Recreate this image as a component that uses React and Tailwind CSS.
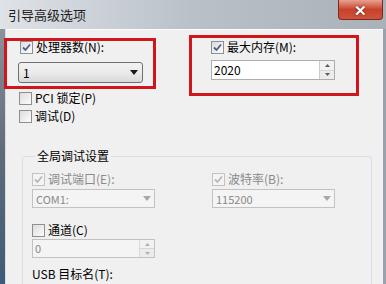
const Check = ({ checked, disabled }) => (
	<div
		className={`${disabled ? "border-[#c3c3c3] bg-[#f4f4f4]" : "border-[#8e8f8f] bg-gradient-to-br from-[#dcdcdc] to-[#fdfdfd]"} border w-[13px] h-[13px] flex items-center justify-center shrink-0`}
	>
		{checked && (
			<svg width="9" height="9" viewBox="0 0 9 9">
				<path
					d="M1 4.5 L3.5 7 L8 1.5"
					fill="none"
					stroke={disabled ? "#b8b8b8" : "#4a5e92"}
					strokeWidth="1.8"
				/>
			</svg>
		)}
	</div>
);

const CheckRow = ({ checked, disabled, label, className = "" }) => (
	<div className={`flex items-center gap-[3px] h-[14px] ${className}`}>
		<Check checked={checked} disabled={disabled} />
		<span
			className={`${disabled ? "text-[#8a8a8a]" : "text-black"} text-[12px] leading-[14px] whitespace-nowrap`}
		>
			{label}
		</span>
	</div>
);

const Arrow = ({ disabled }) => (
	<svg width="8" height="5" viewBox="0 0 8 5">
		<path d="M0 0 L8 0 L4 5 Z" fill={disabled ? "#a8a8a8" : "#1a1a1a"} />
	</svg>
);

const Spinner = ({ disabled }) => (
	<div
		className={`${disabled ? "border-[#dadada]" : "border-[#c9ccd1]"} border-l flex flex-col w-[15px] h-full`}
	>
		<div className="flex-1 flex items-center justify-center border-b border-[#d6d6d6] bg-[#f2f2f2]">
			<svg width="5" height="3" viewBox="0 0 5 3">
				<path d="M0 3 L2.5 0 L5 3 Z" fill={disabled ? "#b0b0b0" : "#5a5a5a"} />
			</svg>
		</div>
		<div className="flex-1 flex items-center justify-center bg-[#ececec]">
			<svg width="5" height="3" viewBox="0 0 5 3">
				<path d="M0 0 L2.5 3 L5 0 Z" fill={disabled ? "#b0b0b0" : "#5a5a5a"} />
			</svg>
		</div>
	</div>
);

export default function App() {
	return (
		<div
			className="w-[386px] h-[284px] overflow-hidden flex flex-col bg-[#f0f0f0]"
			style={{ fontFamily: '"Noto Sans CJK SC", "Liberation Sans", sans-serif' }}
		>
			{/* title bar */}
			<div className="h-[29px] shrink-0 flex items-start bg-gradient-to-r from-[#dfe3e8] via-[#b9c0c8] to-[#aab1b9] relative">
				<span className="ml-[8px] mt-[7px] text-[13px] leading-[16px] text-[#1d1d1d]">
					引导高级选项
				</span>
				<div className="ml-auto mr-[3px] w-[45px] h-[20px] rounded-b-[4px] border border-t-0 border-[#7a2a22] bg-gradient-to-b from-[#e8a090] via-[#c7412c] to-[#d0533a] flex items-center justify-center">
					<span className="text-white font-bold text-[15px] leading-[15px] [text-shadow:0_0_2px_#3a0a05]">
						✕
					</span>
				</div>
			</div>

			<div className="flex-1 flex min-h-0">
				{/* left frame */}
				<div className="w-[6px] shrink-0 bg-gradient-to-b from-[#8a929c] via-[#5d6a7a] to-[#3d5a78] border-r border-[#d8dce0]" />

				{/* client */}
				<div className="flex-1 relative bg-[#f0f0f0] border-t border-[#fcfcfc]">
					<div className="flex pl-[12px] pt-[10px]">
						<div className="w-[126px]">
							<CheckRow checked label="处理器数(N):" className="ml-[2px]" />
							<div className="mt-[8px] h-[21px] w-[125px] rounded-[3px] border border-[#707070] bg-gradient-to-b from-[#f2f2f2] via-[#ebebeb] to-[#d9d9d9] flex items-center px-[4px] justify-between">
								<span className="text-[12px] leading-[14px] text-black">1</span>
								<Arrow />
							</div>
							<CheckRow label="PCI 锁定(P)" className="mt-[8px] ml-[1px]" />
							<CheckRow label="调试(D)" className="mt-[4px] ml-[1px]" />
						</div>
						<div className="ml-[67px] w-[124px]">
							<CheckRow checked label="最大内存(M):" />
							<div className="mt-[6px] h-[20px] w-[124px] border border-[#abadb3] bg-white flex items-stretch">
								<span className="flex-1 text-[12px] leading-[18px] px-[2px] text-black">2020</span>
								<Spinner />
							</div>
						</div>
					</div>

					{/* group box */}
					<fieldset className="ml-[16px] mt-[26px] w-[350px] h-[200px] border border-[#d5dfe5] rounded-[3px] pl-[9px] pt-[9px]">
						<legend className="ml-[3px] px-[2px] text-[12px] leading-[14px] text-black">
							全局调试设置
						</legend>
						<div className="flex">
							<div className="w-[123px]">
								<CheckRow checked disabled label="调试端口(E):" />
								<div className="mt-[3px] h-[19px] w-[123px] border border-[#c2c2c2] bg-[#f4f4f4] flex items-center px-[3px] justify-between">
									<span className="text-[11px] leading-[14px] text-[#8a8a8a]">COM1:</span>
									<Arrow disabled />
								</div>
								<CheckRow label="通道(C)" className="mt-[15px]" />
								<div className="mt-[2px] h-[19px] w-[123px] border border-[#c2c2c2] bg-[#f4f4f4] flex items-stretch">
									<span className="flex-1 text-[11px] leading-[17px] px-[2px] text-[#8a8a8a]">0</span>
									<Spinner disabled />
								</div>
								<div className="mt-[9px] text-[12px] leading-[14px] text-black whitespace-nowrap">
									USB 目标名(T):
								</div>
							</div>
							<div className="ml-[57px] w-[123px]">
								<CheckRow checked disabled label="波特率(B):" />
								<div className="mt-[3px] h-[19px] w-[123px] border border-[#c2c2c2] bg-[#f4f4f4] flex items-center px-[3px] justify-between">
									<span className="text-[11px] leading-[14px] text-[#8a8a8a]">115200</span>
									<Arrow disabled />
								</div>
							</div>
						</div>
					</fieldset>

					{/* red annotation boxes */}
					<div className="absolute left-[-2px] top-[8px] w-[152px] h-[51px] border-[3px] border-[#d0151c]" />
					<div className="absolute left-[183px] top-[5px] w-[170px] h-[61px] border-[3px] border-[#d0151c]" />
				</div>

				{/* right frame */}
				<div className="w-[3px] shrink-0 bg-[#9aa3ad]" />
			</div>
		</div>
	);
}
